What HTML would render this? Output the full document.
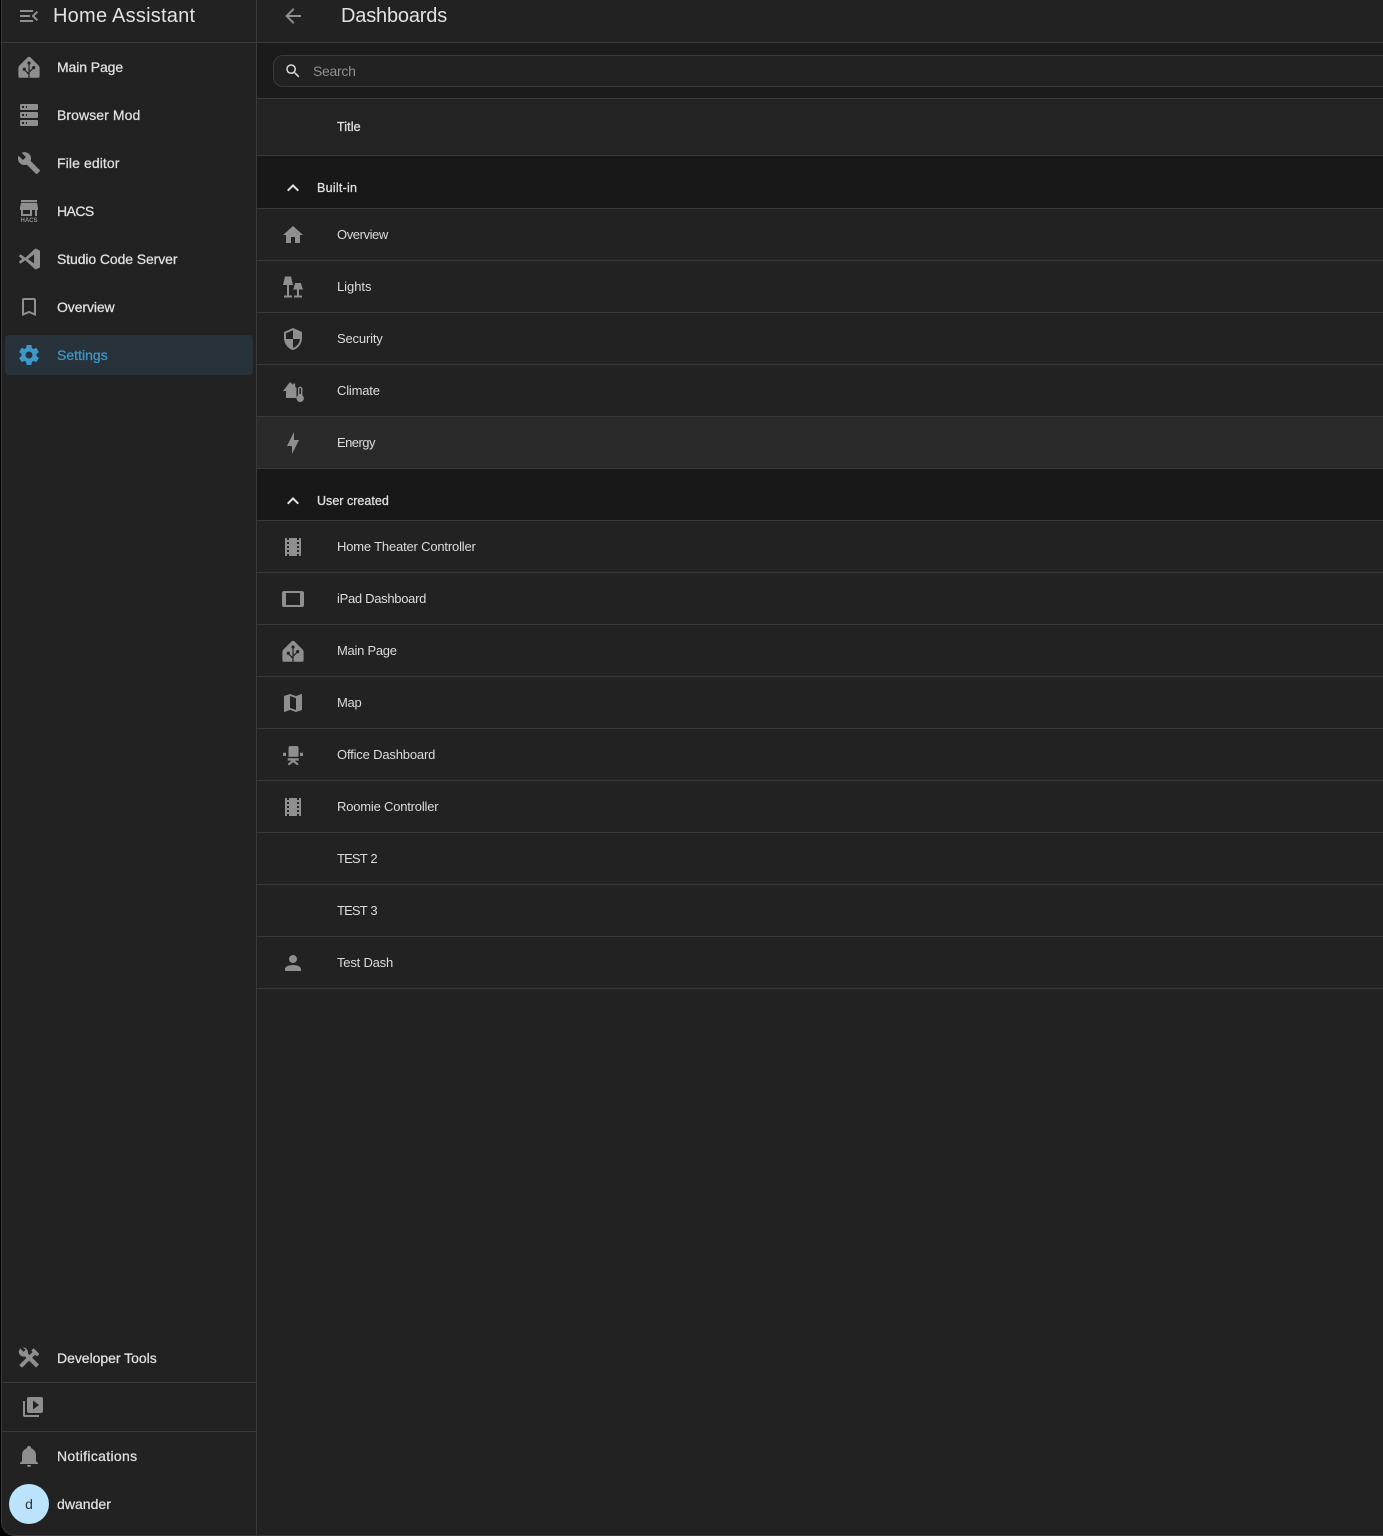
<!DOCTYPE html>
<html lang="en"><head><meta charset="utf-8"><title>Dashboards</title>
<style>
*{box-sizing:border-box;margin:0;padding:0}
html,body{width:1383px;height:1536px;overflow:hidden;background:#000}
body{font-family:"Liberation Sans",Arial,sans-serif;position:relative}
#app{position:absolute;left:1px;top:-1px;width:1400px;height:1537px;background:#222;border:1px solid #3a3a3a;border-radius:0 0 0 14px;overflow:hidden}
.abs{position:absolute}
svg{display:block;fill:#8f8f8f}
#side{position:absolute;left:0;top:1px;width:256px;height:1536px}
.vline{position:absolute;left:254px;top:0;width:1px;height:1536px;background:#3a3a3a;z-index:3}
.line{position:absolute;height:1px;background:#3a3a3a}
.t20{position:absolute;font-size:20px;line-height:24px;color:#e1e1e1}
.nav{position:absolute;left:0;width:254px;height:40px}
.nav svg{position:absolute;left:15px;top:8px}
.nav span{position:absolute;left:55px;top:0;line-height:40px;font-size:14px;letter-spacing:-.1px;color:#e1e1e1;-webkit-text-stroke:.25px #e1e1e1;white-space:nowrap}
.nav.on i{position:absolute;left:3px;top:0;width:248px;height:40px;background:#27323a;border-radius:4px}
.nav.on svg{fill:#3f98c9}
.nav.on span{color:#3f98c9;-webkit-text-stroke:.25px #3f98c9}
#main{position:absolute;left:255px;top:1px;width:1126px;height:1536px;overflow:hidden}
.band{position:absolute;left:0;width:1126px;background:#1b1b1b}
.row{position:absolute;left:0;width:1126px;height:52px;border-bottom:1px solid #3a3a3a;background:#222}
.row svg{position:absolute;left:24px;top:14px}
.row span{position:absolute;left:80px;top:0;line-height:52px;font-size:13px;letter-spacing:-.05px;color:#dcdcdc;white-space:nowrap}
.row.hov{background:#2a2a2a}
.sec{position:absolute;left:0;width:1126px;height:52px;background:#181818;border-bottom:1px solid #3a3a3a}
.sec svg{position:absolute;left:24px;top:20px;fill:#e1e1e1}
.sec span{position:absolute;left:60px;top:12px;line-height:40px;font-size:12.5px;color:#e1e1e1;-webkit-text-stroke:.25px #e1e1e1;white-space:nowrap}
</style></head><body>
<svg width="0" height="0" style="position:absolute"><defs>
<symbol id="ha" viewBox="0 0 24 24"><path d="M12 1.7C12.5 1.7 13 2 13.4 2.4L21.7 10.6Q22.6 11.5 22.6 12.7V21.5Q22.6 22.7 21.4 22.7H2.6Q1.4 22.7 1.4 21.5V12.7Q1.4 11.5 2.3 10.6L10.6 2.4C11 2 11.5 1.7 12 1.7Z"/><path d="M12 8V22.7M12 19.3L7.6 14.9M12 17.3L16.4 12.9" fill="none" stroke="#222" stroke-width="1.2"/><circle cx="12" cy="8" r="1.6" fill="#222"/><circle cx="7.3" cy="14.2" r="1.6" fill="#222"/><circle cx="16.7" cy="12.6" r="1.6" fill="#222"/></symbol>
<symbol id="film" viewBox="0 0 24 24"><path d="M18,9H16V7H18M18,13H16V11H18M18,17H16V15H18M8,9H6V7H8M8,13H6V11H8M8,17H6V15H8M18,3V5H16V3H8V5H6V3H4V21H6V19H8V21H16V19H18V21H20V3H18Z"/></symbol>
<symbol id="chev" viewBox="0 0 24 24"><path d="M7.41,15.41L12,10.83L16.59,15.41L18,14L12,8L6,14L7.41,15.41Z"/></symbol>
</defs></svg>
<div id="app">
<div id="side">
 <svg class="abs" style="left:15px;top:3px" width="24" height="24" viewBox="0 0 24 24"><path d="M21,15.61L19.59,17L14.58,12L19.59,7L21,8.39L17.44,12L21,15.61M3,6H16V8H3V6M3,13V11H13V13H3M3,18V16H16V18H3Z"/></svg>
 <div class="t20" style="left:51px;top:3px;letter-spacing:.24px">Home Assistant</div>
 <div class="line" style="left:0;top:41px;width:254px"></div>

 <div class="nav" style="top:46px"><svg width="24" height="24"><use href="#ha"/></svg><span>Main Page</span></div>
 <div class="nav" style="top:94px"><svg width="24" height="24" viewBox="0 0 24 24"><path d="M4,1H20A1,1 0 0,1 21,2V6A1,1 0 0,1 20,7H4A1,1 0 0,1 3,6V2A1,1 0 0,1 4,1M4,9H20A1,1 0 0,1 21,10V14A1,1 0 0,1 20,15H4A1,1 0 0,1 3,14V10A1,1 0 0,1 4,9M4,17H20A1,1 0 0,1 21,18V22A1,1 0 0,1 20,23H4A1,1 0 0,1 3,22V18A1,1 0 0,1 4,17M9,5H10V3H9V5M9,13H10V11H9V13M9,21H10V19H9V21M5,3V5H7V3H5M5,11V13H7V11H5M5,19V21H7V19H5Z"/></svg><span style="letter-spacing:.08px">Browser Mod</span></div>
 <div class="nav" style="top:142px"><svg width="24" height="24" viewBox="0 0 24 24"><path d="M22.7,19L13.6,9.9C14.5,7.6 14,4.9 12.1,3C10.1,1 7.1,0.6 4.7,1.7L9,6L6,9L1.6,4.7C0.4,7.1 0.9,10.1 2.9,12.1C4.8,14 7.5,14.5 9.8,13.6L18.9,22.7C19.3,23.1 19.9,23.1 20.3,22.7L22.6,20.4C23.1,20 23.1,19.3 22.7,19Z"/></svg><span style="letter-spacing:.1px">File editor</span></div>
 <div class="nav" style="top:190px"><svg width="24" height="24" viewBox="0 0 24 24"><path fill-rule="evenodd" d="M4 1H20V3.2H4ZM4 4H20L21 8.5V11H20V17H4V11H3V8.5ZM6 11V15H13V11ZM15 11V17H18V11Z"/><text x="12" y="23.2" font-size="6" font-weight="700" text-anchor="middle" fill="#8f8f8f" font-family="Liberation Sans">HACS</text></svg><span style="letter-spacing:-.55px">HACS</span></div>
 <div class="nav" style="top:238px"><svg width="24" height="24" viewBox="0 0 24 24"><path fill-rule="evenodd" d="M17,16.47V7.39L11,12L17,16.47M2.22,9.59C2,9.34 1.97,8.95 2.22,8.58L3.22,7.65C3.39,7.5 3.79,7.43 4.08,7.65L8.21,10.8L17.78,2.04C18.16,1.66 18.81,1.5 19.56,1.89L22.33,3.21C22.58,3.36 23,3.68 23,4.41V19.63C23,20.12 22.64,20.64 22.25,20.85L19.2,22.3C18.85,22.45 18.19,22.3 17.96,22.07L8.21,13.2L4.08,16.35C3.79,16.57 3.39,16.5 3.22,16.35L2.22,15.43C1.97,15.05 2,14.66 2.22,14.4L5.22,12L2.22,9.59Z"/></svg><span>Studio Code Server</span></div>
 <div class="nav" style="top:286px"><svg width="24" height="24" viewBox="0 0 24 24"><path d="M17,18L12,15.82L7,18V5H17M17,3H7A2,2 0 0,0 5,5V21L12,18L19,21V5C19,3.89 18.1,3 17,3Z"/></svg><span>Overview</span></div>
 <div class="nav on" style="top:334px"><i></i><svg width="24" height="24" viewBox="0 0 24 24"><path d="M12,15.5A3.5,3.5 0 0,1 8.5,12A3.5,3.5 0 0,1 12,8.5A3.5,3.5 0 0,1 15.5,12A3.5,3.5 0 0,1 12,15.5M19.43,12.97C19.47,12.65 19.5,12.33 19.5,12C19.5,11.67 19.47,11.34 19.43,11L21.54,9.37C21.73,9.22 21.78,8.95 21.66,8.73L19.66,5.27C19.54,5.05 19.27,4.96 19.05,5.05L16.56,6.05C16.04,5.66 15.5,5.32 14.87,5.07L14.5,2.42C14.46,2.18 14.25,2 14,2H10C9.75,2 9.54,2.18 9.5,2.42L9.13,5.07C8.5,5.32 7.96,5.66 7.44,6.05L4.95,5.05C4.73,4.96 4.46,5.05 4.34,5.27L2.34,8.73C2.21,8.95 2.27,9.22 2.46,9.37L4.57,11C4.53,11.34 4.5,11.67 4.5,12C4.5,12.33 4.53,12.65 4.57,12.97L2.46,14.63C2.27,14.78 2.21,15.05 2.34,15.27L4.34,18.73C4.46,18.95 4.73,19.03 4.95,18.95L7.44,17.94C7.96,18.34 8.5,18.68 9.13,18.93L9.5,21.58C9.54,21.82 9.75,22 10,22H14C14.25,22 14.46,21.82 14.5,21.58L14.87,18.93C15.5,18.67 16.04,18.34 16.56,17.94L19.05,18.95C19.27,19.03 19.54,18.95 19.66,18.73L21.66,15.27C21.78,15.05 21.73,14.78 21.54,14.63L19.43,12.97Z"/></svg><span style="letter-spacing:.02px">Settings</span></div>

 <div class="nav" style="top:1337px"><svg width="24" height="24" viewBox="0 0 24 24"><path d="M3.2 2.4L6.6 5.8L8.6 3.8L5.6 1.4A5 5 0 0 1 10.9 7.4L22 18.5L19 21.5L8 10.5A5 5 0 0 1 1.8 5Z"/><path d="M14.2 4.6L16.6 2.2L22.4 8L20 10.4L18.2 8.6L5 21.8L2.2 19L15.6 6Z"/></svg><span style="letter-spacing:-.03px">Developer Tools</span></div>
 <div class="line" style="left:0;top:1381px;width:254px"></div>
 <svg class="abs" style="left:19px;top:1394px" width="24" height="24" viewBox="0 0 24 24"><path d="M4,6H2V20A2,2 0 0,0 4,22H18V20H4V6M20,2H8A2,2 0 0,0 6,4V16A2,2 0 0,0 8,18H20A2,2 0 0,0 22,16V4A2,2 0 0,0 20,2M12,14.5V5.5L18,10L12,14.5Z"/></svg>
 <div class="line" style="left:0;top:1430px;width:254px"></div>
 <div class="nav" style="top:1435px"><svg width="24" height="24" viewBox="0 0 24 24"><path d="M21,19V20H3V19L5,17V11C5,7.9 7.03,5.17 10,4.29C10,4.19 10,4.1 10,4A2,2 0 0,1 12,2A2,2 0 0,1 14,4C14,4.1 14,4.19 14,4.29C16.97,5.17 19,7.9 19,11V17L21,19M14,21A2,2 0 0,1 12,23A2,2 0 0,1 10,21"/></svg><span style="letter-spacing:.32px">Notifications</span></div>
 <div class="nav" style="top:1483px"><span style="letter-spacing:.03px">dwander</span></div>
 <div class="abs" style="left:7px;top:1483px;width:40px;height:40px;border-radius:50%;background:#bbe3fb;color:#333;font-size:14px;line-height:40px;text-align:center">d</div>
</div>
<div class="vline"></div>
<div id="main">
 <svg class="abs" style="left:24px;top:3px" width="24" height="24" viewBox="0 0 24 24"><path d="M20,11V13H8L13.5,18.5L12.08,19.92L4.16,12L12.08,4.08L13.5,5.5L8,11H20Z"/></svg>
 <div class="t20" style="left:84px;top:3px;letter-spacing:-.18px">Dashboards</div>
 <div class="line" style="left:0;top:41px;width:1126px"></div>
 <div class="band" style="top:42px;height:56px;border-bottom:1px solid #3a3a3a"></div>
 <div class="abs" style="left:16px;top:54px;width:1200px;height:32px;background:#222;border:1px solid #3a3a3a;border-radius:10px"></div>
 <svg class="abs" style="left:27px;top:61px;fill:#dcdcdc" width="18" height="18" viewBox="0 0 24 24"><path d="M9.5,3A6.5,6.5 0 0,1 16,9.5C16,11.11 15.41,12.59 14.44,13.73L14.71,14H15.5L20.5,19L19,20.5L14,15.5V14.71L13.73,14.44C12.59,15.41 11.11,16 9.5,16A6.5,6.5 0 0,1 3,9.5A6.5,6.5 0 0,1 9.5,3M9.5,5C7,5 5,7 5,9.5C5,12 7,14 9.5,14C12,14 14,12 14,9.5C14,7 12,5 9.5,5Z"/></svg>
 <div class="abs" style="left:56px;top:54px;line-height:32px;font-size:14px;color:#8f8f8f;letter-spacing:-.3px">Search</div>
 <div class="abs" style="left:0;top:98px;width:1126px;height:57px;background:#232323;border-bottom:1px solid #3a3a3a"></div>
 <div class="abs" style="left:80px;top:98px;line-height:57px;font-size:12.5px;letter-spacing:.1px;color:#e1e1e1;-webkit-text-stroke:.3px #e1e1e1">Title</div>

 <div class="sec" style="top:155px;height:53px"><svg width="24" height="24"><use href="#chev"/></svg><span style="letter-spacing:.25px">Built-in</span></div>
 <div class="row" style="top:208px"><svg width="24" height="24" viewBox="0 0 24 24"><path d="M10,20V14H14V20H19V12H22L12,3L2,12H5V20H10Z"/></svg><span style="letter-spacing:-.42px">Overview</span></div>
 <div class="row" style="top:260px"><svg width="24" height="24" viewBox="0 0 24 24"><path d="M4 1.5H10L12 10H2ZM6 10H8V20.5H11V22.5H3V20.5H6ZM14.2 8H19.8L22 14.5H12.2ZM16 14.5H18V20.5H21V22.5H13V20.5H16Z"/></svg><span>Lights</span></div>
 <div class="row" style="top:312px"><svg width="24" height="24" viewBox="0 0 24 24"><path d="M12,12H19C18.47,16.11 15.72,19.78 12,20.92V12H5V6.3L12,3.19M12,1L3,5V11C3,16.55 6.84,21.73 12,23C17.16,21.73 21,16.55 21,11V5L12,1Z"/></svg><span style="letter-spacing:-.17px">Security</span></div>
 <div class="row" style="top:364px"><svg width="24" height="24" viewBox="0 0 24 24"><path d="M9 3L12.2 6V4.5H14.2V7.8L15.5 9V19H5V12H2Z"/><path fill-rule="evenodd" d="M17 9.8a2.2 2.2 0 0 1 4.4 0V16.4a3.7 3.7 0 1 1-4.4 0ZM18.4 9.8V15H20V9.8a.8 .8 0 0 0-1.6 0Z"/></svg><span style="letter-spacing:-.19px">Climate</span></div>
 <div class="row hov" style="top:416px"><svg width="24" height="24" viewBox="0 0 24 24"><path d="M11 15H6L13 1V9H18L11 23V15Z"/></svg><span style="letter-spacing:-.55px">Energy</span></div>

 <div class="sec" style="top:468px"><svg width="24" height="24"><use href="#chev"/></svg><span style="letter-spacing:.02px">User created</span></div>
 <div class="row" style="top:520px"><svg width="24" height="24"><use href="#film"/></svg><span style="letter-spacing:-.18px">Home Theater Controller</span></div>
 <div class="row" style="top:572px"><svg width="24" height="24" viewBox="0 0 24 24"><path d="M19,18H5V6H19M21,4H3C1.89,4 1,4.89 1,6V18A2,2 0 0,0 3,20H21A2,2 0 0,0 23,18V6C23,4.89 22.1,4 21,4Z"/></svg><span style="letter-spacing:-.3px">iPad Dashboard</span></div>
 <div class="row" style="top:624px"><svg width="24" height="24"><use href="#ha"/></svg><span style="letter-spacing:-.27px">Main Page</span></div>
 <div class="row" style="top:676px"><svg width="24" height="24" viewBox="0 0 24 24"><path d="M15,19L9,16.89V5L15,7.11M20.5,3C20.44,3 20.39,3 20.34,3L15,5.1L9,3L3.36,4.9C3.15,4.97 3,5.15 3,5.38V20.5A0.5,0.5 0 0,0 3.5,21C3.55,21 3.61,21 3.66,20.97L9,18.9L15,21L20.64,19.1C20.85,19 21,18.85 21,18.62V3.5A0.5,0.5 0 0,0 20.5,3Z"/></svg><span style="letter-spacing:-.3px">Map</span></div>
 <div class="row" style="top:728px"><svg width="24" height="24" viewBox="0 0 24 24"><path d="M9.5 3H15.5A2 2 0 0 1 17.5 5V13.7H7.5V5A2 2 0 0 1 9.5 3ZM2 9.7H5V13H2ZM19 9.7H22V13H19ZM6.7 15.3H17.7V17.6H13.8L17.3 20.6V22H15.8L12.2 19.3L8.6 22H7.1V20.6L10.6 17.6H6.7Z"/></svg><span style="letter-spacing:-.17px">Office Dashboard</span></div>
 <div class="row" style="top:780px"><svg width="24" height="24"><use href="#film"/></svg><span style="letter-spacing:-.2px">Roomie Controller</span></div>
 <div class="row" style="top:832px"><span style="letter-spacing:-.85px;word-spacing:1px">TEST 2</span></div>
 <div class="row" style="top:884px"><span style="letter-spacing:-.85px;word-spacing:1px">TEST 3</span></div>
 <div class="row" style="top:936px"><svg width="24" height="24" viewBox="0 0 24 24"><path d="M12,4A4,4 0 0,1 16,8A4,4 0 0,1 12,12A4,4 0 0,1 8,8A4,4 0 0,1 12,4M12,14C16.42,14 20,15.79 20,18V20H4V18C4,15.79 7.58,14 12,14Z"/></svg><span style="letter-spacing:-.2px">Test Dash</span></div>
</div>
</div>
</body></html>
